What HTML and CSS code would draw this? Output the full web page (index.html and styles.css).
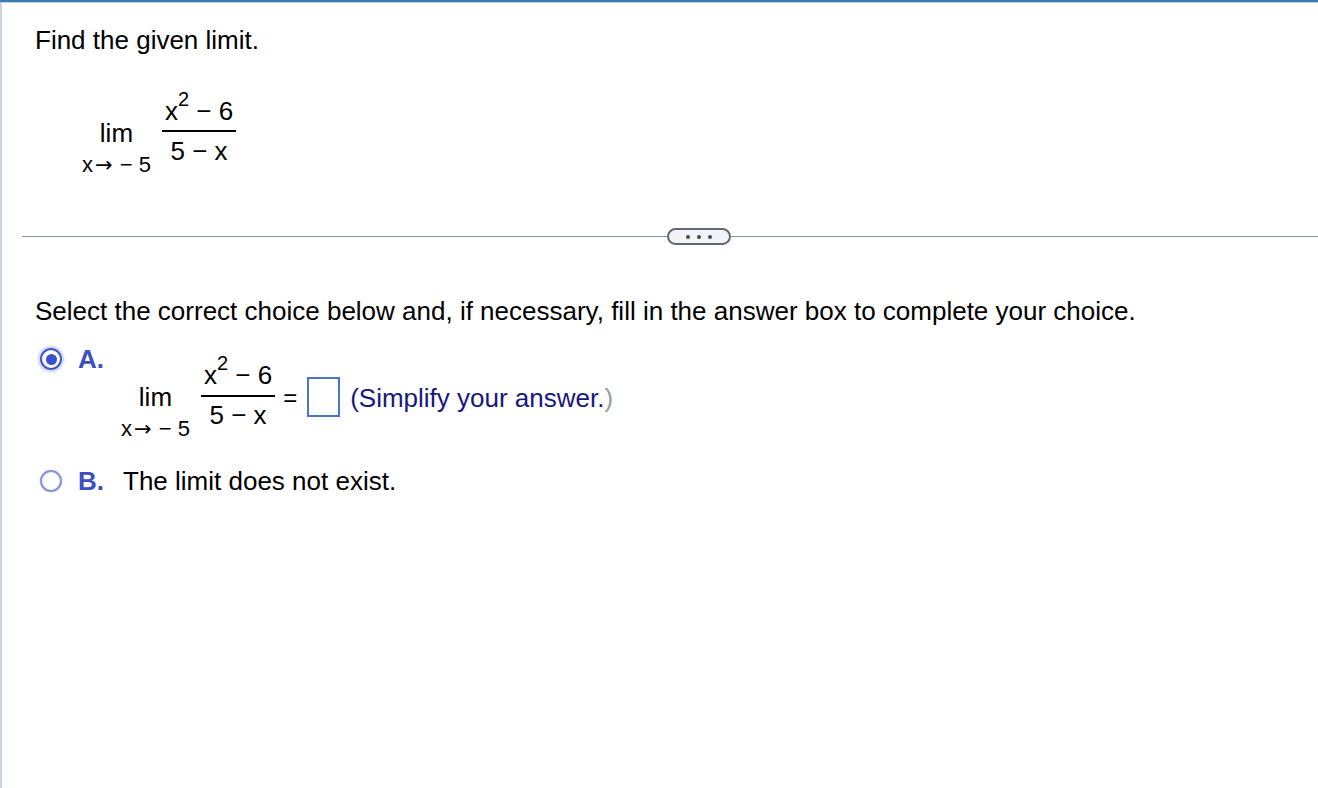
FILE: index.html
```html
<!DOCTYPE html>
<html>
<head>
<meta charset="utf-8">
<link rel="stylesheet" href="styles.css">
</head>
<body>
<div class="topbar"></div>
<div class="page">
  <div class="question">
    <p class="prompt">Find the given limit.</p>
    <div class="expr q-expr">
      <div class="lim">
        <span class="lim-word">lim</span>
        <span class="lim-sub">x<span class="arr">→</span> − 5</span>
      </div>
      <div class="frac">
        <span class="num">x<sup>2</sup> − 6</span>
        <span class="den">5 − x</span>
      </div>
    </div>
  </div>
  <div class="divider">
    <span class="line left"></span>
    <span class="more"><i></i><i></i><i></i></span>
    <span class="line right"></span>
  </div>
  <div class="answer">
    <p class="instr">Select the correct choice below and, if necessary, fill in the answer box to complete your choice.</p>
    <div class="choice choice-a">
      <span class="radio checked"><span class="dot"></span></span>
      <span class="letter">A.</span>
      <div class="expr a-expr">
        <div class="lim">
          <span class="lim-word">lim</span>
          <span class="lim-sub">x<span class="arr">→</span> − 5</span>
        </div>
        <div class="frac">
          <span class="num">x<sup>2</sup> − 6</span>
          <span class="den">5 − x</span>
        </div>
        <span class="eq">=</span>
        <span class="box"></span>
        <span class="hint">(Simplify your answer.<span class="paren">)</span></span>
      </div>
    </div>
    <div class="choice choice-b">
      <span class="radio"></span>
      <span class="letter">B.</span>
      <span class="text">The limit does not exist.</span>
    </div>
  </div>
</div>
</body>
</html>
```
FILE: styles.css
```css
html, body {
  margin: 0;
  padding: 0;
  background: #fff;
  font-family: "Liberation Sans", Arial, sans-serif;
  color: #000;
}
body {
  width: 1318px;
  height: 788px;
  overflow: hidden;
}
.topbar {
  height: 2px;
  background: #3b7db0;
  border-bottom: 1px solid #bcd2e4;
}
.page {
  border-left: 2px solid #cdd3e1;
  height: 785px;
  box-sizing: border-box;
}
.question {
  padding: 22px 0 0 33px;
}
.prompt {
  margin: 0;
  font-size: 26px;
  line-height: 30px;
}
.expr {
  display: flex;
  align-items: flex-start;
}
.q-expr {
  margin: 42px 0 0 47px;
}
.lim {
  display: flex;
  flex-direction: column;
  align-items: center;
  padding-top: 21px;
}
.lim-word {
  font-size: 26px;
  line-height: 30px;
}
.lim-sub {
  font-size: 22px;
  line-height: 26px;
  margin-top: 4px;
  white-space: nowrap;
}
.arr {
  font-family: "DejaVu Sans", sans-serif;
  font-size: 21px;
  margin: 0 1px 0 2px;
}
.frac {
  display: flex;
  flex-direction: column;
  align-items: stretch;
  margin-left: 11px;
  font-size: 26px;
}
.num {
  line-height: 28px;
  padding: 0 3px 5px;
  border-bottom: 2px solid #000;
  white-space: nowrap;
  text-align: center;
}
.num sup {
  font-size: 20px;
  line-height: 0;
  vertical-align: 14px;
}
.den {
  line-height: 28px;
  padding-top: 5px;
  white-space: nowrap;
  text-align: center;
}
.divider {
  display: flex;
  align-items: center;
  margin: 50px 0 0 20px;
}
.divider .line {
  height: 1px;
  background: #8c96a3;
}
.divider .left {
  flex: 0 0 645px;
}
.divider .right {
  flex: 1;
}
.more {
  flex: none;
  width: 64px;
  height: 17px;
  box-sizing: border-box;
  border: 2px solid #5e6976;
  border-radius: 9px;
  background: #f1f3f6;
  display: flex;
  align-items: center;
  justify-content: center;
  gap: 7px;
}
.more i {
  width: 4px;
  height: 4px;
  border-radius: 50%;
  background: #3f4853;
}
.answer {
  padding: 54px 0 0 33px;
}
.instr {
  margin: 0;
  font-size: 26px;
  line-height: 24px;
}
.choice {
  display: flex;
  align-items: flex-start;
}
.choice-a {
  margin-top: 24px;
}
.radio {
  width: 22px;
  height: 22px;
  border-radius: 50%;
  box-sizing: border-box;
  border: 2px solid #8593df;
  box-shadow: 0 0 1px #8593df;
  margin: 1px 0 0 5px;
  flex: none;
  display: flex;
  align-items: center;
  justify-content: center;
}
.radio.checked {
  border: 2px solid #3f55cb;
  box-shadow: 0 0 0 2px #d5dcf5, 0 0 2px 3px #eef1fb;
}
.dot {
  width: 11px;
  height: 11px;
  border-radius: 50%;
  background: #3a50cc;
}
.letter {
  color: #3b4fc2;
  font-weight: bold;
  font-size: 26px;
  line-height: 24px;
  margin-left: 16px;
  width: 45px;
  flex: none;
}
.a-expr {
  margin: 14px 0 0 -2px;
}
.a-expr .frac {
  margin-left: 11px;
}
.a-expr .num {
  padding-bottom: 6px;
}
.a-expr .den {
  padding-top: 4px;
}
.eq {
  font-size: 24px;
  line-height: 30px;
  margin: 22px 0 0 8px;
}
.box {
  width: 33px;
  height: 40px;
  box-sizing: border-box;
  border: 2px solid #4b73cf;
  margin: 16px 0 0 10px;
}
.hint {
  color: #17187d;
  font-size: 26px;
  line-height: 30px;
  margin: 22px 0 0 10px;
  white-space: nowrap;
}
.paren {
  color: #9a9a9a;
}
.choice-b {
  margin-top: 27px;
}
.text {
  font-size: 26px;
  line-height: 24px;
}
```
